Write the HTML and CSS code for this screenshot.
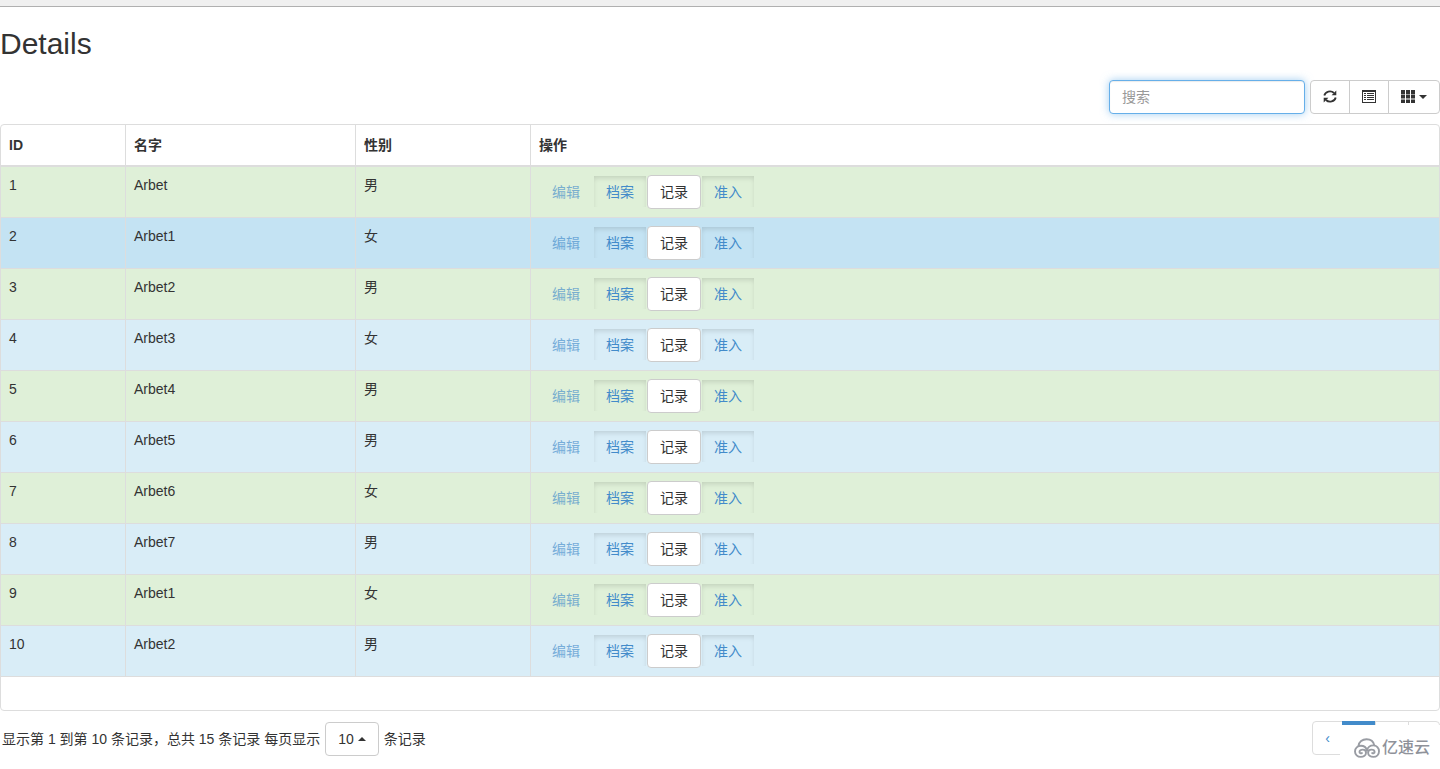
FILE: index.html
```html
<!DOCTYPE html>
<html lang="zh-CN">
<head>
<meta charset="utf-8">
<title>Details</title>
<link rel="stylesheet" href="styles.css">
</head>
<body>
<div class="top-strip"></div>
<main class="page">
  <h2 class="title">Details</h2>
  <div class="toolbar">
    <input class="search" type="text" placeholder="搜索" aria-label="搜索">
    <div class="tools">
      <button class="btn btn-default" type="button" aria-label="刷新"><svg class="icon" viewBox="0 0 14 14"><path d="M1.300 5.500A5.700 5.200 0 0 1 11 3M12.700 7.500A5.700 5.200 0 0 1 3 10" fill="none" stroke="#333" stroke-width="1.800"/><path d="M13.300 .6V5.300H8.600ZM.7 12.400V7.700H5.400Z" fill="#333"/></svg></button>
      <button class="btn btn-default" type="button" aria-label="切换视图"><svg class="icon" viewBox="0 0 14 14"><path d="M0 0H14V13H0ZM1 2V12H13V2Z" fill="#333" fill-rule="evenodd"/><path d="M2 3h2v1H2zM5 3h7v1H5zM2 5h2v1H2zM5 5h7v1H5zM2 7h2v1H2zM5 7h7v1H5zM2 9h2v1H2zM5 9h7v1H5z" fill="#333"/></svg></button>
      <button class="btn btn-default" type="button" aria-label="列"><svg class="icon" viewBox="0 0 14 14"><path d="M0 0h4v4H0zM5 0h4v4H5zM10 0h4v4h-4zM0 4.500h4v4H0zM5 4.500h4v4H5zM10 4.500h4v4h-4zM0 9.500h4v3.500H0zM5 9.500h4v3.500H5zM10 9.500h4v3.500h-4z" fill="#333"/></svg><span class="caret"></span></button>
    </div>
  </div>

  <div class="frame">
    <table class="grid">
      <colgroup><col class="c-id"><col class="c-name"><col class="c-sex"><col></colgroup>
      <thead><tr><th>ID</th><th>名字</th><th>性别</th><th>操作</th></tr></thead>
      <tbody>
        <tr class="success"><td>1</td><td>Arbet</td><td>男</td><td><div class="actions"><button class="btn link muted" type="button">编辑</button><button class="btn link pressed" type="button">档案</button><button class="btn btn-default" type="button">记录</button><button class="btn link pressed" type="button">准入</button></div></td></tr>
        <tr class="info hover"><td>2</td><td>Arbet1</td><td>女</td><td><div class="actions"><button class="btn link muted" type="button">编辑</button><button class="btn link pressed" type="button">档案</button><button class="btn btn-default" type="button">记录</button><button class="btn link pressed" type="button">准入</button></div></td></tr>
        <tr class="success"><td>3</td><td>Arbet2</td><td>男</td><td><div class="actions"><button class="btn link muted" type="button">编辑</button><button class="btn link pressed" type="button">档案</button><button class="btn btn-default" type="button">记录</button><button class="btn link pressed" type="button">准入</button></div></td></tr>
        <tr class="info"><td>4</td><td>Arbet3</td><td>女</td><td><div class="actions"><button class="btn link muted" type="button">编辑</button><button class="btn link pressed" type="button">档案</button><button class="btn btn-default" type="button">记录</button><button class="btn link pressed" type="button">准入</button></div></td></tr>
        <tr class="success"><td>5</td><td>Arbet4</td><td>男</td><td><div class="actions"><button class="btn link muted" type="button">编辑</button><button class="btn link pressed" type="button">档案</button><button class="btn btn-default" type="button">记录</button><button class="btn link pressed" type="button">准入</button></div></td></tr>
        <tr class="info"><td>6</td><td>Arbet5</td><td>男</td><td><div class="actions"><button class="btn link muted" type="button">编辑</button><button class="btn link pressed" type="button">档案</button><button class="btn btn-default" type="button">记录</button><button class="btn link pressed" type="button">准入</button></div></td></tr>
        <tr class="success"><td>7</td><td>Arbet6</td><td>女</td><td><div class="actions"><button class="btn link muted" type="button">编辑</button><button class="btn link pressed" type="button">档案</button><button class="btn btn-default" type="button">记录</button><button class="btn link pressed" type="button">准入</button></div></td></tr>
        <tr class="info"><td>8</td><td>Arbet7</td><td>男</td><td><div class="actions"><button class="btn link muted" type="button">编辑</button><button class="btn link pressed" type="button">档案</button><button class="btn btn-default" type="button">记录</button><button class="btn link pressed" type="button">准入</button></div></td></tr>
        <tr class="success"><td>9</td><td>Arbet1</td><td>女</td><td><div class="actions"><button class="btn link muted" type="button">编辑</button><button class="btn link pressed" type="button">档案</button><button class="btn btn-default" type="button">记录</button><button class="btn link pressed" type="button">准入</button></div></td></tr>
        <tr class="info"><td>10</td><td>Arbet2</td><td>男</td><td><div class="actions"><button class="btn link muted" type="button">编辑</button><button class="btn link pressed" type="button">档案</button><button class="btn btn-default" type="button">记录</button><button class="btn link pressed" type="button">准入</button></div></td></tr>
      </tbody>
    </table>
  </div>

  <footer class="footer">
    <div class="summary">
      <span>显示第 1 到第 10 条记录，总共 15 条记录 每页显示</span>
      <button class="btn btn-default page-size" type="button" aria-haspopup="true">10<span class="caret up"></span></button>
      <span>条记录</span>
    </div>
    <nav class="pagination" aria-label="分页">
      <a class="page-link" href="#">‹</a>
      <a class="page-link active" href="#" aria-label="第一页"></a>
      <a class="page-link" href="#" aria-label="第二页"></a>
      <a class="page-link" href="#" aria-label="下一页"></a>
      <div class="watermark">
        <svg class="cloud" viewBox="0 0 26 20"><g fill="none" stroke="#999ca3" stroke-width="1.900" stroke-linecap="round"><path d="M4.500 7.800C5 4 8.300 1.200 12.500 1.200C16.500 1.200 19.600 3.700 20.300 7.400"/><path d="M13 12.300C12.200 9.500 9.700 7.800 6.900 7.800C3.600 7.800 1 10.200 1 13.400C1 16.500 3.500 18.900 6.700 18.900C9.700 18.900 12 17.200 12 14.800C12 12.800 10.500 11.600 8.700 11.600C6.900 11.600 5.500 12.700 5.500 14C5.500 15.200 6.700 15.600 7.900 15.100"/><path d="M13 12.300C13.800 9.300 16.400 7.400 19.400 7.400C22.600 7.400 25 10 25 13.200C25 16.500 22.600 18.900 19.400 18.900C16.400 18.900 14.100 17.200 14.100 14.800C14.100 12.800 15.600 11.600 17.400 11.600C19.200 11.600 20.600 12.700 20.600 14C20.600 15.200 19.400 15.600 18.200 15.100"/></g></svg>
        <span>亿速云</span>
      </div>
    </nav>
  </footer>
</main>
</body>
</html>
```
FILE: styles.css
```css
* { box-sizing: border-box; }
body {
  margin: 0;
  min-height: 100vh;
  background: #fff;
  color: #333;
  font: 14px/20px "Liberation Sans", Arial, "Noto Sans CJK SC", sans-serif;
}
.top-strip { height: 7px; background: #f0f0f0; border-bottom: 1px solid #b0b0b0; }
.page { padding-top: 20px; }
.title { margin: 0 0 20px; font-size: 30px; line-height: 33px; font-weight: 400; }

.toolbar { display: flex; justify-content: flex-end; gap: 5px; margin-bottom: 10px; }
.search {
  width: 196px;
  height: 34px;
  padding: 6px 12px;
  border: 1px solid #66afe9;
  border-radius: 4px;
  outline: 0;
  font: inherit;
  color: #555;
  box-shadow: inset 0 1px 1px rgba(0, 0, 0, .08), 0 0 8px rgba(102, 175, 233, .6);
}
.search::placeholder { color: #999; }

.btn {
  display: inline-flex;
  align-items: center;
  justify-content: center;
  height: 34px;
  padding: 6px 12px;
  border: 1px solid transparent;
  border-radius: 4px;
  background: transparent;
  font: inherit;
  color: #333;
  cursor: pointer;
}
.btn-default { background: #fff; border-color: #ccc; }
.link { color: #428bca; }
.muted { opacity: .65; }
.pressed {
  padding: 6px 13px;
  border: 0;
  border-radius: 4px;
  box-shadow: inset 0 3px 5px rgba(0, 0, 0, .125);
  clip-path: inset(1px 1px 2px 1px);
}

.tools { display: flex; }
.tools .btn { border-radius: 0; min-width: 40px; }
.tools .btn + .btn { margin-left: -1px; }
.tools .btn:first-child { border-radius: 4px 0 0 4px; }
.tools .btn:last-child { border-radius: 0 4px 4px 0; }
.icon { width: 14px; height: 14px; }
.caret {
  margin-left: 4px;
  border-top: 4px solid #333;
  border-left: 4px solid transparent;
  border-right: 4px solid transparent;
}
.caret.up { border-top: 0; border-bottom: 4px solid #333; }

.frame { border: 1px solid #ddd; border-radius: 4px; padding-bottom: 33px; overflow: hidden; }
.grid { width: 100%; border-collapse: separate; border-spacing: 0; table-layout: fixed; }
.c-id { width: 125px; }
.c-name { width: 230px; }
.c-sex { width: 175px; }
.grid th, .grid td { padding: 8px; text-align: left; vertical-align: top; border-right: 1px solid #ddd; }
.grid th { padding: 10px 8px; border-bottom: 1px solid #ddd; }
.grid td { border-top: 1px solid #ddd; }
.grid tbody tr:last-child td { border-bottom: 1px solid #ddd; }
.grid th:last-child, .grid td:last-child { border-right: 0; }
.success { background: #dff0d8; }
.info { background: #d9edf7; }
.info.hover { background: #c4e3f3; }
.actions { display: flex; }

.footer { display: flex; justify-content: space-between; align-items: flex-start; padding: 10px 0; }
.summary { display: flex; align-items: center; gap: 5px; padding: 1px 0 0 2px; }
.pagination { display: flex; position: relative; }
.page-link {
  width: 34px;
  height: 34px;
  padding: 6px 0;
  border: 1px solid #ddd;
  margin-left: -1px;
  text-align: center;
  text-decoration: none;
  color: #428bca;
}
.page-link:first-child { width: 31px; border-radius: 4px 0 0 4px; }
.page-link:nth-last-child(2) { width: 32px; border-radius: 0 4px 4px 0; }
.page-link.active { background: #428bca; border-color: #428bca; }
.watermark {
  position: absolute;
  top: 4px;
  right: 0;
  display: flex;
  align-items: center;
  gap: 2px;
  width: 100px;
  height: 44px;
  padding: 2px 0 0 14px;
  background: #fff;
  color: #8f929a;
  font-size: 16px;
  font-weight: 500;
}
.cloud { width: 26px; height: 20px; }
```
